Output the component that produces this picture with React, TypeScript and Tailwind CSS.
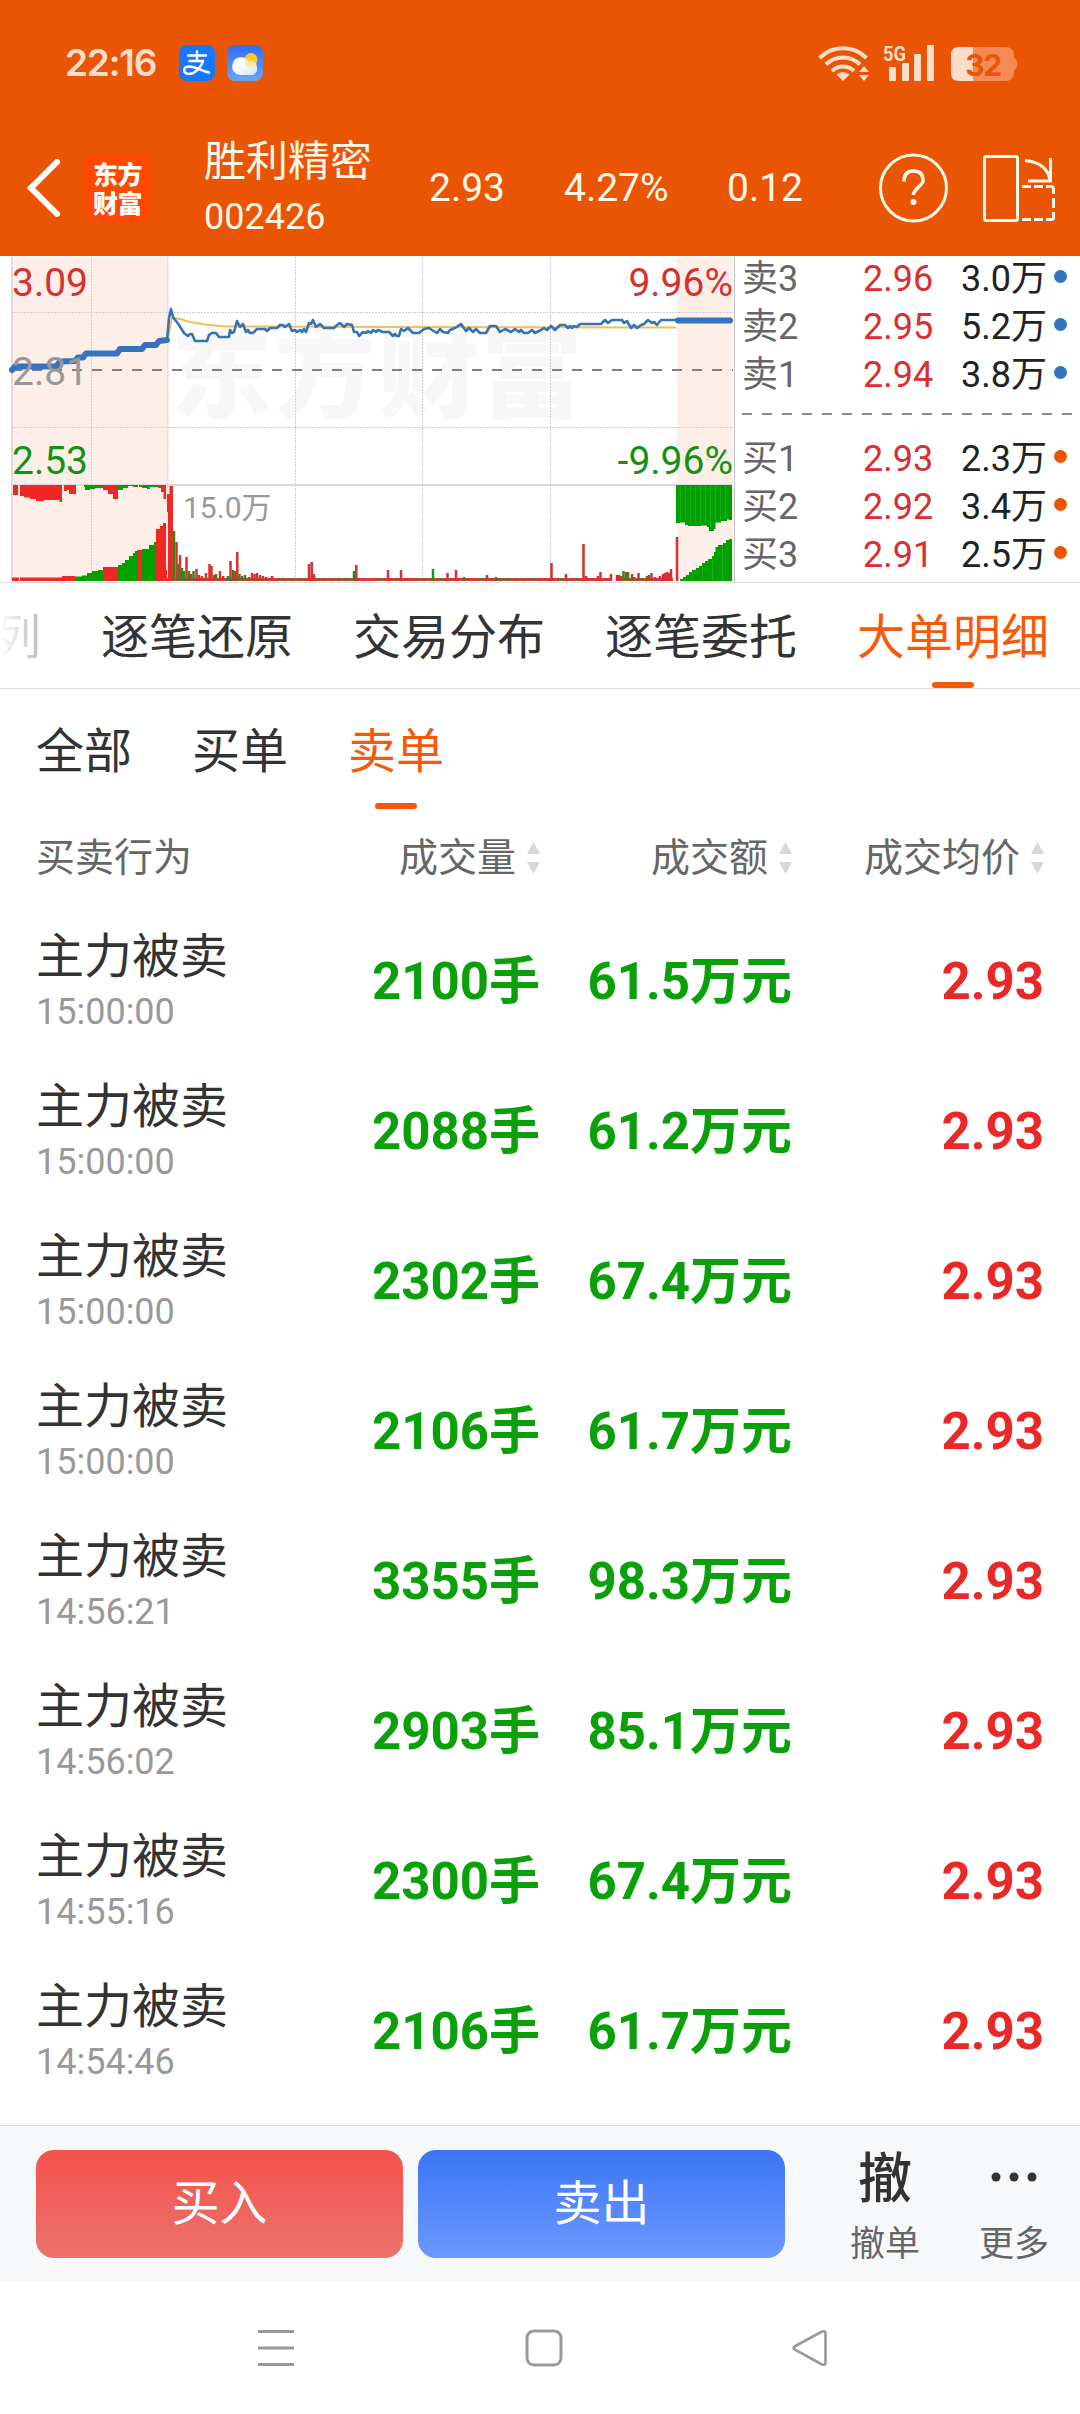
import clsx from 'clsx'

const RED = '#f02724'
const GREEN = '#00a000'

const trades = [
  { time: '15:00:00', volume: '2100手', amount: '61.5万元', price: '2.93' },
  { time: '15:00:00', volume: '2088手', amount: '61.2万元', price: '2.93' },
  { time: '15:00:00', volume: '2302手', amount: '67.4万元', price: '2.93' },
  { time: '15:00:00', volume: '2106手', amount: '61.7万元', price: '2.93' },
  { time: '14:56:21', volume: '3355手', amount: '98.3万元', price: '2.93' },
  { time: '14:56:02', volume: '2903手', amount: '85.1万元', price: '2.93' },
  { time: '14:55:16', volume: '2300手', amount: '67.4万元', price: '2.93' },
  { time: '14:54:46', volume: '2106手', amount: '61.7万元', price: '2.93' },
]

const asks = [
  { label: '卖3', price: '2.96', volume: '3.0万' },
  { label: '卖2', price: '2.95', volume: '5.2万' },
  { label: '卖1', price: '2.94', volume: '3.8万' },
]

const bids = [
  { label: '买1', price: '2.93', volume: '2.3万' },
  { label: '买2', price: '2.92', volume: '3.4万' },
  { label: '买3', price: '2.91', volume: '2.5万' },
]

const tabs = ['逐笔还原', '交易分布', '逐笔委托', '大单明细']
const filters = ['全部', '买单', '卖单']

// chart coordinates: origin is the top left of the quote panel
const preOpen = '12,114 15,110.5 56,110.5 60,105.5 75,105 78,101.5 83,101.5 86,97.5 117,97.5 120,93 142,93 145,89 156,89 159,85 167,84'
const intraday =
  '167,84 169,62 171,53 173,61 179,69 184,77 188,80 190,78 192,78 195,85 207,85 209,79 212,77 216,77 219,81 229,81 230,74 232,77 234,76 237,65 240,71 243,68 246,76 248,74 250,77 253,77 257,73 265,73 267,75 270,72 277,72 280,69 283,69 285,71 289,68 292,75 295,74 297,76 300,74 302,76 304,73 306,76 309,67 311,68 313,64 316,71 320,68 324,72 334,72 337,69 340,67 344,71 347,68 352,69 354,76 357,76 359,80 363,76 366,77 368,75 371,77 373,74 376,76 378,74 383,76 389,76 393,80 395,78 397,80 399,80 401,73 404,75 408,72 413,77 419,77 424,73 429,72 432,74 437,77 440,73 443,76 448,77 450,74 455,72 461,68 466,75 469,72 473,76 476,73 480,77 486,77 490,70 496,70 500,76 505,73 511,76 515,73 519,76 521,74 524,77 528,77 532,74 535,77 541,74 544,72 547,74 551,70 555,74 560,69 565,69 568,72 570,70 572,72 574,70 577,71 580,68 601,68 605,64 608,67 612,64 622,64 624,67 627,65 631,72 634,69 637,72 641,69 644,68 648,64 652,67 654,66 657,69 661,64 677,64'
const average = '168,82 172,62 180,63 190,66 205,68.5 225,70.5 250,70.5 400,71 676,71.5'

type Bar = [x: number, height: number, color: 'r' | 'g']

const volumeBars: Bar[] = [
  [174, 50, 'g'], [176.5, 39, 'r'], [178.5, 17, 'g'], [180, 26, 'r'], [182, 13, 'g'], [184, 10, 'g'],
  [186.5, 24, 'r'], [189, 10, 'g'], [191, 7, 'r'], [193.5, 10, 'g'], [196.5, 12, 'r'], [199, 6, 'r'],
  [202, 5, 'r'], [206, 8, 'r'], [209.5, 17, 'r'], [211.5, 15, 'r'], [214, 6, 'r'], [216, 7, 'g'],
  [220, 10, 'r'], [223, 5, 'r'], [228, 5, 'g'], [230.5, 20, 'r'], [233, 11, 'g'], [235, 10, 'r'],
  [237.3, 29, 'r'], [239.5, 7, 'g'], [242, 5, 'r'], [245, 6, 'g'], [249, 4, 'r'], [252, 8, 'r'],
  [254.5, 7, 'r'], [257, 8, 'r'], [260, 6, 'r'], [263, 5, 'r'], [266, 4, 'r'], [272, 5, 'r'],
  [309, 17, 'r'], [311.7, 19, 'r'], [314, 7, 'r'], [354, 10, 'g'], [356.3, 16, 'r'], [388, 11, 'r'],
  [401, 11, 'r'], [433, 12, 'g'], [447.5, 8, 'r'], [456, 11, 'r'], [464, 4, 'g'], [487, 6, 'r'],
  [496, 4, 'g'], [551.5, 18, 'r'], [566, 7, 'r'], [583.5, 37, 'r'], [586, 5, 'r'], [598, 5, 'r'],
  [600.5, 9, 'r'], [611, 7, 'r'], [617, 6, 'r'], [619, 6, 'r'], [621, 5, 'r'], [623.5, 10, 'g'],
  [626, 9, 'r'], [628, 9, 'g'], [632, 7, 'r'], [634, 4, 'g'], [638.5, 8, 'r'], [647, 5, 'r'],
  [649, 6, 'g'], [651.5, 8, 'r'], [655, 4, 'r'], [660, 5, 'r'], [663, 7, 'r'], [665, 8, 'r'],
  [667, 9, 'r'], [669, 8, 'r'], [671, 12, 'r'], [677, 44, 'r'],
]

function VolumeBars() {
  return (
    <g>
      {/* call auction */}
      <path fill={RED} d="M13 229H18V239H13ZM20 229H62V246H59.500V244H44V245H36V243H30V241.500H24V240H20ZM64 229H76V238H69V234H67V235H64ZM103 229H118V243H113V238H108V234H103ZM139 229H142V231H139ZM158 229H166V243H163.500V236H161V232H158Z" />
      <path fill={GREEN} d="M84 229H103V232H95V233H90V234H85V231H84ZM118 229H138V231H133V230H128V232H123V234H118ZM142 229H158V231H150V233H147V232H142Z" />
      <path fill={RED} d="M12 325V321.500H62V320H75V325ZM103 325V311H118V325ZM137 325V294H142V325ZM156 325V273H160V270H163V267H166V314H167V238H169.500V230H173V325Z" />
      <path fill={GREEN} d="M75 325V320.500H82V319.500H87V317H92V315H98V314H103V325ZM118 325V309H122V307H125V304H129V300H133V297H135V295H137V325ZM142 325V293H149V289H154V286H156V325Z" />
      <path stroke="#fdeee8" strokeWidth="1" d="M19.500 320V325M167.500 256V322" fill="none" />
      <rect x="173" y="322" width="439" height="3" fill="#d03a3a" />
      <rect x="616" y="322" width="57" height="3" fill="#d03a3a" />
      <path d="M174 323.500H310M318 323.500H355M380 323.500H402M418 323.500H465M480 323.500H540M560 323.500H585M625 323.500H655" stroke="#3b8a1f" strokeWidth="3" strokeDasharray="2.500 5" fill="none" />
      {volumeBars.map(([x, h, c]) => (
        <rect key={x} x={x - 1.25} y={325 - h} width="2.5" height={h} fill={c === 'r' ? '#d6302f' : '#1f8f18'} />
      ))}
      {/* closing auction */}
      <path fill={GREEN} d="M676 229H732V264H729V263.500H727V265H721V266.500H715.500V273H714V275H709V271H707V269.500H701V270H688V269H685V266.500H680V267H676Z" />
      <path fill={GREEN} d="M680 325V323H683V321H686V319H689V316H692V314H696V312H699V310H702V307H705V305H708V303H712V300H714V296H715.500V291H718V289H723V287H726V284H729V283H732V325Z" />
      <path d="M680.500 230V264M685.500 230V264M690.500 230V267M695.500 230V267M700.500 230V267M705.500 230V267M710.500 230V270M715.500 230V264M720.500 230V264M725.500 230V262M692.500 316V325M702.500 310V325M712.500 303V325M722.500 290V325" stroke="#2fb52f" strokeWidth="0.6" fill="none" />
    </g>
  )
}

function QuoteChart() {
  return (
    <svg width="736" height="327" viewBox="0 0 736 327" className="shrink-0" fontFamily="Roboto, 'Noto Sans CJK SC', sans-serif">
      <rect x="12" y="1" width="156" height="324" fill="#fdeee8" />
      <rect x="677" y="1" width="56" height="324" fill="#fdeee8" />
      <text x="171" y="154" fontSize="101" fontWeight="900" fill="#f7f7f7" letterSpacing="2.500" fontFamily="'Noto Sans CJK SC', sans-serif">
        东方财富
      </text>
      <path d="M91.500 1V325M168 1V325M295.500 1V325M422.500 1V325M550.500 1V325M12 56.500H733M12 171.500H733" stroke="#cfcfcf" strokeWidth="1" strokeDasharray="2 1" fill="none" />
      <path d="M12 1V325" stroke="#dcdcdc" strokeWidth="2" />
      <path d="M12 114H733" stroke="#7f7f7f" strokeWidth="2" strokeDasharray="10 10" />
      <path d="M12 229H733" stroke="#d9d9d9" strokeWidth="2" />
      <polyline points={average} fill="none" stroke="#f3bd5a" strokeWidth="2" />
      <polyline points={preOpen} fill="none" stroke="#3573c0" strokeWidth="6" strokeLinejoin="round" strokeLinecap="round" />
      <polyline points={intraday} fill="none" stroke="#3573b5" strokeWidth="2.6" strokeLinejoin="round" />
      <path d="M678 64.500H730" stroke="#3573c0" strokeWidth="6" strokeLinecap="round" />
      <VolumeBars />
      <path d="M734.500 1V326" stroke="#c4c4c4" strokeWidth="1" />
      <g fontSize="39">
        <text x="12" y="40" fill="#d6302f">3.09</text>
        <text x="12" y="129" fill="#999999">2.81</text>
        <text x="12" y="218" fill="#149114">2.53</text>
        <text x="733" y="40" fill="#d6302f" textAnchor="end">9.96%</text>
        <text x="733" y="218" fill="#149114" textAnchor="end">-9.96%</text>
      </g>
      <text x="183" y="262" fontSize="30" fill="#999999">15.0万</text>
    </svg>
  )
}

function OrderRow({ label, price, volume, dot }: { label: string; price: string; volume: string; dot: string }) {
  return (
    <div className="flex h-12 items-center text-[36px] leading-[48px]">
      <span className="w-[121px] text-[#666]">{label}</span>
      <span className="w-[98px] text-[#d6302f]">{price}</span>
      <span className="w-[93px] text-[#222]">{volume}</span>
      <span className={clsx('-mt-[6px] size-[13px] rounded-full', dot)} />
    </div>
  )
}

function OrderBook() {
  return (
    <div className="-mt-px flex-1 pl-[6px]">
      {asks.map((a) => (
        <OrderRow key={a.label} {...a} dot="bg-[#3573c0]" />
      ))}
      <svg width="330" height="36" className="block">
        <path d="M0 15H330" stroke="#8a8a8a" strokeWidth="2" strokeDasharray="10 10" />
      </svg>
      {bids.map((b) => (
        <OrderRow key={b.label} {...b} dot="bg-[#e95503]" />
      ))}
    </div>
  )
}

function StatusBar() {
  return (
    <div className="flex h-[120px] items-start pt-[45px] pr-[62px] pl-[65px] text-[#fddccb]">
      <span className="w-[114px] font-['Inter'] text-[37px] leading-9 font-semibold tracking-[-1.2px]">22:16</span>
      <svg width="36" height="36" viewBox="0 0 36 36">
        <rect width="36" height="36" rx="8" fill="#1677ff" />
        <g fill="none" stroke="#fff" strokeWidth="2.4" strokeLinecap="round">
          <path d="M9 10.500H27M18 6.500V15.500M10.500 16H24" />
          <path d="M24 16C22 23 15 29.500 9 28.800C3.500 28 4 21.500 10 21.500C17 21.500 22 26 30 27.500" />
        </g>
      </svg>
      <svg width="36" height="36" viewBox="0 0 36 36" className="ml-3">
        <defs>
          <linearGradient id="sky" x1="0" y1="0" x2="0" y2="1">
            <stop offset="0" stopColor="#2f6df6" />
            <stop offset="1" stopColor="#69a4f3" />
          </linearGradient>
          <linearGradient id="cloud" x1="0" y1="0" x2="1" y2="1">
            <stop offset="0.3" stopColor="#ffffff" />
            <stop offset="1" stopColor="#d5e3fb" />
          </linearGradient>
        </defs>
        <rect width="36" height="36" rx="8" fill="url(#sky)" />
        <circle cx="24" cy="14.500" r="6.500" fill="#fcc928" />
        <path d="M13 30A8 8 0 0 1 5.500 20A8.500 8.500 0 0 1 21 16A7 7 0 0 1 30 23A6 6 0 0 1 25 30Z" fill="url(#cloud)" />
        <path d="M18 13A8 8 0 0 1 21.500 16.500A7 7 0 0 1 29.500 19A6.500 6.500 0 0 1 18 13Z" fill="#fde9a6" />
      </svg>
      <div className="ml-auto flex items-start">
        <svg width="52" height="37" viewBox="0 0 52 37">
          <g fill="none" stroke="currentColor" strokeWidth="4">
            <path d="M1.500 13A33 33 0 0 1 48.500 13" />
            <path d="M8 19.500A24 24 0 0 1 42 19.500" />
            <path d="M14 26A15.500 15.500 0 0 1 36 26" />
          </g>
          <path d="M25 36L18.500 29.500Q25 24.500 31.500 29.500Z" fill="currentColor" />
          <path d="M46 21L51 27H41ZM46 36L51 30H41Z" fill="currentColor" />
        </svg>
        <svg width="54" height="37" viewBox="0 0 54 37" className="ml-[13px]" fill="currentColor">
          <text x="0" y="15.500" fontFamily="Roboto" fontWeight="700" fontSize="20" textLength="23" lengthAdjust="spacingAndGlyphs">
            5G
          </text>
          <rect x="6" y="22" width="7" height="14" rx="1" />
          <rect x="19" y="18" width="7" height="18" rx="1" />
          <rect x="31" y="9" width="7" height="27" rx="1" />
          <rect x="44" y="0" width="7" height="36" rx="1" />
        </svg>
        <svg width="67" height="37" viewBox="0 0 67 37" className="ml-[14px]">
          <rect x="0" y="2" width="63" height="34" rx="8" fill="#f48b54" />
          <path d="M63 13Q66 14 66 19Q66 24 63 25Z" fill="#f48b54" />
          <path d="M22 2H8Q0 2 0 10V28Q0 36 8 36H22Z" fill="#fddccb" />
          <text x="32" y="30.500" textAnchor="middle" fontFamily="Inter" fontWeight="700" fontSize="30" letterSpacing="-1.500" fill="#e95503">
            32
          </text>
        </svg>
      </div>
    </div>
  )
}

function Header() {
  return (
    <header className="h-64 bg-[#e95503] text-[#fff7ea]">
      <StatusBar />
      <div className="flex h-[136px] items-center pl-[26px]">
        <svg width="34" height="58" viewBox="0 0 34 58" fill="none" stroke="#fff" strokeWidth="6">
          <path d="M31 3L5 29L31 55" strokeLinecap="round" />
        </svg>
        <div className="ml-6 flex h-[68px] w-[67px] flex-col items-center justify-center rounded-[13px] bg-[#ff4800] font-['Noto_Sans_CJK_SC'] text-[25px] leading-[29px] font-black tracking-[-0.5px] text-white">
          <span>东方</span>
          <span>财富</span>
        </div>
        <div className="ml-[53px] w-[225px]">
          <div className="text-[42px] leading-[58px]">胜利精密</div>
          <div className="text-[36px] leading-[52px]">002426</div>
        </div>
        <span className="w-[135px] text-[39px]">2.93</span>
        <span className="w-[163px] text-[39px]">4.27%</span>
        <span className="w-[151px] text-[39px]">0.12</span>
        <svg width="72" height="72" viewBox="0 0 72 72" fill="none" stroke="currentColor" className="shrink-0">
          <circle cx="35.500" cy="36" r="33" strokeWidth="3" />
          <path d="M26 29.500Q26 19 35.500 19T45 28.500C45 34 35.500 36 35.500 43" strokeWidth="3.5" />
          <circle cx="35.500" cy="50" r="3" fill="currentColor" stroke="none" />
        </svg>
        <svg width="76" height="72" viewBox="0 0 76 72" fill="none" stroke="currentColor" strokeWidth="3" className="ml-[29px] shrink-0">
          <rect x="5.500" y="4.500" width="33" height="64" rx="2" />
          <path d="M46 8.500C60 10 69 16 71 28M71.500 6V29H49" />
          <path d="M43 34.500H52M55 34.500H64M67 34.500H72Q74.500 34.500 74.500 37V42M74.500 46V56M74.500 60V66Q74.500 67.500 72 67.500H67M64 67.500H55M52 67.500H43" />
        </svg>
      </div>
    </header>
  )
}

function SortIcon() {
  return (
    <svg width="13" height="34" viewBox="0 0 13 34" fill="#d8d8d8" className="ml-[11px] shrink-0">
      <path d="M6.500 1L13 13H0ZM6.500 33L13 21H0Z" />
    </svg>
  )
}

function SortHeader({ label, className }: { label: string; className?: string }) {
  return (
    <div className={clsx('flex items-center justify-end', className)}>
      {label}
      <SortIcon />
    </div>
  )
}

export default function App() {
  return (
    <div className="flex h-[2414px] w-[1080px] flex-col overflow-hidden bg-white font-[Roboto,'Noto_Sans_CJK_SC',sans-serif] text-[#333]">
      <Header />

      <section className="flex h-[327px] border-b border-[#dedede]">
        <QuoteChart />
        <OrderBook />
      </section>

      <nav className="flex h-[106px] items-stretch gap-[60px] overflow-hidden border-b border-[#dedede] text-[48px] leading-[109px]">
        <span className="-ml-[7px] w-12 shrink-0 bg-gradient-to-r from-white from-15% to-[#bbb] bg-clip-text text-transparent">列</span>
        {tabs.map((tab) => {
          const active = tab === '大单明细'
          return (
            <div key={tab} className={clsx('flex shrink-0 flex-col items-center', active && 'text-[#f55a0a]')}>
              <span className="h-[99px]">{tab}</span>
              {active && <span className="h-[6px] w-[42px] rounded-full bg-[#f55a0a]" />}
            </div>
          )
        })}
      </nav>

      <div className="flex h-[120px] gap-[60px] pl-9 text-[48px] leading-[126px]">
        {filters.map((f) => {
          const active = f === '卖单'
          return (
            <div key={f} className={clsx('flex flex-col items-center', active && 'text-[#f55a0a]')}>
              <span className="h-[114px]">{f}</span>
              {active && <span className="h-[6px] w-[42px] rounded-full bg-[#f55a0a]" />}
            </div>
          )
        })}
      </div>

      <div className="flex h-[98px] items-center px-9 text-[39px] text-[#666]">
        <span className="w-[200px]">买卖行为</span>
        <SortHeader label="成交量" className="w-[304px]" />
        <SortHeader label="成交额" className="w-[252px]" />
        <SortHeader label="成交均价" className="w-[252px]" />
      </div>

      <main className="flex-1 overflow-hidden">
        {trades.map((t, i) => (
          <div key={i} className="flex h-[150px] items-center px-9">
            <div className="w-[214px]">
              <div className="text-[48px] leading-[60px]">主力被卖</div>
              <div className="text-[36px] leading-[50px] text-[#999]">{t.time}</div>
            </div>
            <span className="w-[290px] text-right text-[51px] font-bold text-[#0aa00a]">{t.volume}</span>
            <span className="w-[252px] text-right text-[51px] font-bold text-[#0aa00a]">{t.amount}</span>
            <span className="w-[252px] text-right text-[51px] font-bold text-[#e92828]">{t.price}</span>
          </div>
        ))}
      </main>

      <footer className="flex h-[157px] shrink-0 items-start border-t border-[#d9dadb] bg-[#f6f8fa] pt-6 pl-9">
        <button className="h-[108px] w-[367px] rounded-[18px] bg-gradient-to-b from-[#f4514b] to-[#ec716d] text-[48px] text-white">买入</button>
        <button className="ml-[15px] h-[108px] w-[367px] rounded-[18px] bg-gradient-to-b from-[#3a75f7] to-[#6c98fe] text-[48px] text-white">卖出</button>
        <div className="ml-9 flex w-[128px] flex-col items-center">
          <span className="text-[54px] leading-[60px] font-medium">撤</span>
          <span className="mt-[9px] text-[35px] leading-[52px] text-[#666]">撤单</span>
        </div>
        <div className="flex w-[130px] flex-col items-center">
          <svg width="48" height="60" viewBox="0 0 48 60" fill="#333">
            <circle cx="6" cy="27" r="4.500" />
            <circle cx="24" cy="27" r="4.500" />
            <circle cx="42" cy="27" r="4.500" />
          </svg>
          <span className="mt-[9px] text-[35px] leading-[52px] text-[#666]">更多</span>
        </div>
      </footer>

      <div className="flex h-[132px] shrink-0 items-center pl-[258px] text-[#999]">
        <svg width="36" height="38" viewBox="0 0 36 38" fill="none" stroke="currentColor" strokeWidth="3">
          <path d="M0 2.500H36M0 19H36M0 35.500H36" />
        </svg>
        <svg width="38" height="38" viewBox="0 0 38 38" fill="none" stroke="currentColor" strokeWidth="3" className="ml-[231px]">
          <rect x="2" y="2" width="34" height="34" rx="7" />
        </svg>
        <svg width="38" height="38" viewBox="0 0 38 38" fill="none" stroke="currentColor" strokeWidth="2.6" className="ml-[228px]">
          <path d="M3.500 17.500L31 2.500Q34.500 1.500 34.500 4.500V33.500Q34.500 36.500 31 35.500L3.500 20.500Q1.500 19 3.500 17.500Z" />
        </svg>
      </div>
    </div>
  )
}
